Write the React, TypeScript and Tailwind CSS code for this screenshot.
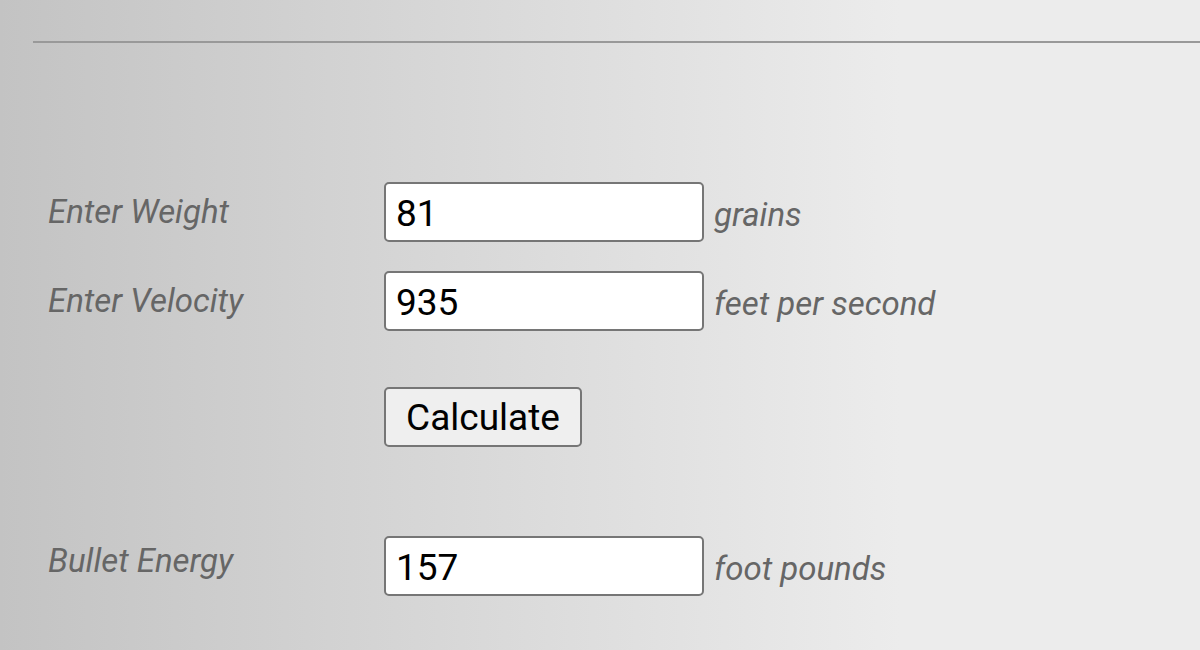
import React from 'react';

const Row: React.FC<{ label: string; value: string; unit: string; top?: string }> = ({ label, value, unit, top }) => (
  <div className="flex items-start">
    <div className={`w-[336px] text-[33px] italic text-[#666] ${top ?? 'mt-[5px]'}`}>{label}</div>
    <input
      readOnly
      value={value}
      className="h-[60px] w-[320px] rounded-[5px] border-2 border-[#767676] bg-white px-[10px] pt-[2px] text-[37px] text-black outline-none"
    />
    <span className="ml-[10px] mt-[6px] self-center text-[33px] italic text-[#666]">{unit}</span>
  </div>
);

export default function App() {
  return (
    <div
      className="h-[650px] w-[1200px] overflow-hidden bg-[linear-gradient(to_right,#c3c3c3,#ececec_75%)] pl-[33px] pt-[41px]"
      style={{ fontFamily: 'Roboto, sans-serif' }}
    >
      <div className="h-[2px] bg-[#999]" />
      <div className="flex flex-col pl-[15px] pt-[139px]">
        <Row label="Enter Weight" value="81" unit="grains" />
        <div className="h-[29px]" />
        <Row label="Enter Velocity" value="935" unit="feet per second" />
        <div className="ml-[336px] mt-[56px]">
          <button className="h-[60px] w-[198px] rounded-[5px] border-2 border-[#767676] bg-[#efefef] pt-[1px] text-[37px] text-black">
            Calculate
          </button>
        </div>
        <div className="mt-[89px]">
          <Row label="Bullet Energy" value="157" unit="foot pounds" top="mt-0" />
        </div>
      </div>
    </div>
  );
}
